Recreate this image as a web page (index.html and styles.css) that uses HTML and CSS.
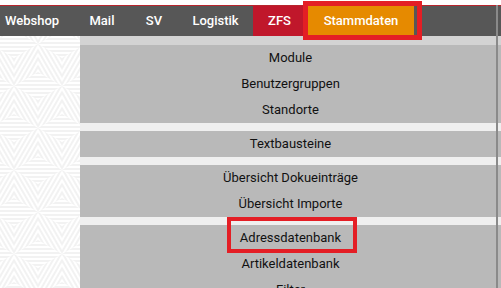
FILE: index.html
```html
<!DOCTYPE html>
<html lang="de">
<head>
<meta charset="utf-8">
<title>Stammdaten</title>
<link rel="stylesheet" href="styles.css">
</head>
<body>
<div class="top-gap"></div>
<nav class="nav">
  <a class="nav-item webshop">Webshop</a>
  <a class="nav-item mail">Mail</a>
  <a class="nav-item sv">SV</a>
  <a class="nav-item logistik">Logistik</a>
  <a class="nav-item zfs">ZFS</a>
  <a class="nav-item active">Stammdaten</a>
</nav>
<div class="main">
  <aside class="sidebar">
    <svg class="pattern" xmlns="http://www.w3.org/2000/svg" width="80" height="260">
      <defs>
        <pattern id="sh" patternUnits="userSpaceOnUse" width="4" height="4">
          <rect x="0" y="0" width="4" height="2" fill="#f2f2f2"/>
        </pattern>
        <pattern id="sd1" patternUnits="userSpaceOnUse" width="4" height="4" patternTransform="rotate(60)">
          <rect x="0" y="0" width="4" height="2" fill="#f2f2f2"/>
        </pattern>
        <pattern id="sd2" patternUnits="userSpaceOnUse" width="4" height="4" patternTransform="rotate(-60)">
          <rect x="0" y="0" width="4" height="2" fill="#f2f2f2"/>
        </pattern>
        <g id="cube">
          <polygon points="0,0 -24,-14 0,-28 24,-14" fill="url(#sh)"/>
          <polygon points="0,0 -24,-14 -24,14 0,28" fill="url(#sd1)"/>
          <polygon points="0,0 24,-14 24,14 0,28" fill="url(#sd2)"/>
        </g>
        <pattern id="cubes" patternUnits="userSpaceOnUse" width="48" height="84" x="-10" y="-20">
          <use href="#cube"/>
          <use href="#cube" x="48" y="0"/>
          <use href="#cube" x="24" y="42"/>
          <use href="#cube" x="0" y="84"/>
          <use href="#cube" x="48" y="84"/>
        </pattern>
      </defs>
      <rect x="0" y="0" width="80" height="260" fill="#ffffff"/>
      <rect x="0" y="0" width="80" height="260" fill="url(#cubes)"/>
    </svg>
  </aside>
  <div class="menu">
    <div class="group">
      <div class="item">Module</div>
      <div class="item">Benutzergruppen</div>
      <div class="item">Standorte</div>
    </div>
    <div class="group">
      <div class="item">Textbausteine</div>
    </div>
    <div class="group">
      <div class="item">Übersicht Dokueinträge</div>
      <div class="item">Übersicht Importe</div>
    </div>
    <div class="group">
      <div class="item">Adressdatenbank</div>
      <div class="item">Artikeldatenbank</div>
      <div class="item">Filter</div>
    </div>
  </div>
</div>
<div class="divider"></div>
<div class="mark mark-nav"></div>
<div class="mark mark-addr"></div>
</body>
</html>
```

FILE: styles.css
```css
html, body {
  margin: 0;
  padding: 0;
}
body {
  width: 501px;
  height: 288px;
  overflow: hidden;
  position: relative;
  background: #ffffff;
  font-family: Roboto, "Liberation Sans", sans-serif;
}
.top-gap {
  height: 5px;
  background: #ffffff;
}
.nav {
  display: flex;
  height: 30px;
  background: #575757;
  border-top: 1px solid #b8252d;
  font-size: 13px;
  font-weight: 500;
}
.nav-item {
  display: block;
  flex: none;
  line-height: 30px;
  color: #ffffff;
  white-space: nowrap;
  text-align: center;
}
.nav-item.webshop {
  width: 69px;
  padding-left: 5px;
  text-align: left;
}
.nav-item.mail {
  width: 56px;
}
.nav-item.sv {
  width: 48px;
}
.nav-item.logistik {
  width: 75px;
}
.nav-item.zfs {
  width: 50px;
  padding-left: 3px;
  box-sizing: border-box;
  background: #c0172b;
}
.nav-item.active {
  width: 106px;
  margin-left: 5px;
  background: #e68a00;
}
.main {
  display: flex;
  height: 252px;
}
.sidebar {
  width: 80px;
  flex: none;
  overflow: hidden;
}
.pattern {
  display: block;
}
.menu {
  flex: 1;
  display: flex;
  flex-direction: column;
  gap: 8px;
  background: #efefef;
  border-top: 9px solid #d3d3d3;
  overflow: hidden;
}
.group {
  background: #b9b9b9;
}
.item {
  height: 26px;
  line-height: 26px;
  text-align: center;
  font-size: 13px;
  color: #111111;
  white-space: nowrap;
}
.divider {
  position: absolute;
  left: 496px;
  top: 5px;
  width: 2px;
  height: 283px;
  background: #8a8a8a;
}
.mark {
  position: absolute;
  box-sizing: border-box;
  border: 4px solid #e41e25;
}
.mark-nav {
  left: 303px;
  top: 1px;
  width: 119px;
  height: 39px;
  border-width: 5px;
}
.mark-addr {
  left: 227px;
  top: 217px;
  width: 130px;
  height: 36px;
}
```
